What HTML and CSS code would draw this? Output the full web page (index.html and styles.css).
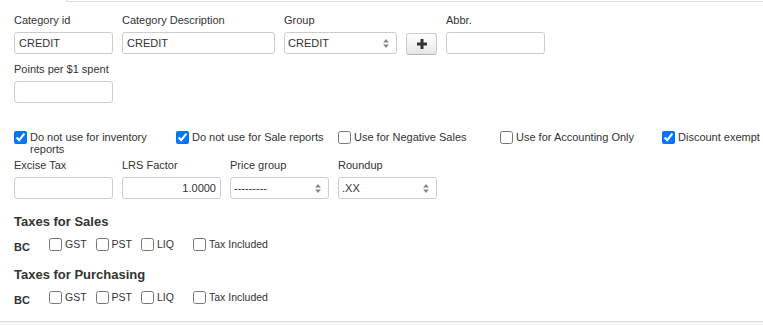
FILE: index.html
```html
<!DOCTYPE html>
<html lang="en">
  <head>
    <title>Category</title>
    <meta charset="UTF-8" />
    <meta name="viewport" content="width=device-width" />
    <link rel="stylesheet" href="styles.css">
  </head>
  <body>
    <!-- tab strip above the panel -->
    <div class="tabbar">
      <div class="tab-active"></div>
      <div class="tab-rest"></div>
    </div>

    <form class="panel">
      <!-- first row: id, description, group, abbr -->
      <div class="row">
        <div class="field w99">
          <label for="cat-id">Category id</label>
          <input id="cat-id" class="input-field" type="text" value="CREDIT" />
        </div>
        <div class="field w153">
          <label for="cat-desc">Category Description</label>
          <input id="cat-desc" class="input-field" type="text" value="CREDIT" />
        </div>
        <div class="field w113">
          <label for="group">Group</label>
          <div class="select-wrap">
            <select id="group" class="input-field">
              <option>CREDIT</option>
            </select>
            <svg class="arrows" width="6" height="9" viewBox="0 0 6 9"><path d="M3 0L6 3.5H0Z M3 9L0 5.5H6Z" fill="#888" /></svg>
          </div>
        </div>
        <div class="field">
          <label>&nbsp;</label>
          <button type="button" class="btn-add">
            <svg width="10" height="10" viewBox="0 0 10 10"><path d="M3.5 0h3v3.5H10v3H6.5V10h-3V6.5H0v-3h3.5Z" fill="#333" /></svg>
          </button>
        </div>
        <div class="field w99">
          <label for="abbr">Abbr.</label>
          <input id="abbr" class="input-field" type="text" />
        </div>
      </div>

      <div class="row">
        <div class="field w99">
          <label for="points">Points per $1 spent</label>
          <input id="points" class="input-field" type="text" />
        </div>
      </div>

      <!-- flags -->
      <div class="checks">
        <label class="check"><input type="checkbox" checked /><span>Do not use for inventory reports</span></label>
        <label class="check"><input type="checkbox" checked /><span>Do not use for Sale reports</span></label>
        <label class="check"><input type="checkbox" /><span>Use for Negative Sales</span></label>
        <label class="check"><input type="checkbox" /><span>Use for Accounting Only</span></label>
        <label class="check"><input type="checkbox" checked /><span>Discount exempt</span></label>
      </div>

      <div class="row">
        <div class="field w99">
          <label for="excise">Excise Tax</label>
          <input id="excise" class="input-field" type="text" />
        </div>
        <div class="field w99">
          <label for="lrs">LRS Factor</label>
          <input id="lrs" class="input-field num" type="text" value="1.0000" />
        </div>
        <div class="field w99">
          <label for="price-group">Price group</label>
          <div class="select-wrap">
            <select id="price-group" class="input-field">
              <option>---------</option>
            </select>
            <svg class="arrows" width="6" height="9" viewBox="0 0 6 9"><path d="M3 0L6 3.5H0Z M3 9L0 5.5H6Z" fill="#888" /></svg>
          </div>
        </div>
        <div class="field w99">
          <label for="roundup">Roundup</label>
          <div class="select-wrap">
            <select id="roundup" class="input-field">
              <option>.XX</option>
            </select>
            <svg class="arrows" width="6" height="9" viewBox="0 0 6 9"><path d="M3 0L6 3.5H0Z M3 9L0 5.5H6Z" fill="#888" /></svg>
          </div>
        </div>
      </div>

      <!-- taxes -->
      <h4>Taxes for Sales</h4>
      <div class="tax-row">
        <span class="prov">BC</span>
        <label class="tax"><input type="checkbox" />GST</label>
        <label class="tax"><input type="checkbox" />PST</label>
        <label class="tax"><input type="checkbox" />LIQ</label>
        <label class="tax incl"><input type="checkbox" />Tax Included</label>
      </div>

      <h4>Taxes for Purchasing</h4>
      <div class="tax-row">
        <span class="prov">BC</span>
        <label class="tax"><input type="checkbox" />GST</label>
        <label class="tax"><input type="checkbox" />PST</label>
        <label class="tax"><input type="checkbox" />LIQ</label>
        <label class="tax incl"><input type="checkbox" />Tax Included</label>
      </div>
    </form>

    <div class="footer"></div>
  </body>
</html>
```

FILE: styles.css
```css
* {
  box-sizing: border-box;
}

html,
body {
  height: 100%;
}

body {
  margin: 0;
  background-color: #fff;
  color: #333;
  font-family: "Liberation Sans", Arial, sans-serif;
  font-size: 11px;
  display: flex;
  flex-direction: column;
  overflow: hidden;
}

/* tab strip */
.tabbar {
  display: flex;
  height: 2px;
}

.tab-active {
  width: 66px;
}

.tab-rest {
  flex: 1;
  border-left: 1px solid #ddd;
  border-bottom: 1px solid #ddd;
}

.panel {
  padding: 11px 14px 0;
  height: 319px;
}

.row {
  display: flex;
  gap: 9px;
  margin-bottom: 7px;
}

.field {
  display: flex;
  flex-direction: column;
}

.field label {
  line-height: 15px;
  margin-bottom: 4px;
}

.w99 {
  width: 99px;
}

.w153 {
  width: 153px;
}

.w113 {
  width: 113px;
}

.input-field {
  width: 100%;
  height: 22px;
  border: 1px solid #ccc;
  border-radius: 3px;
  padding: 0 4px;
  font-family: inherit;
  font-size: 11px;
  color: #333;
  background-color: #fff;
}

.num {
  text-align: right;
}

.select-wrap {
  position: relative;
}

select.input-field {
  appearance: none;
  padding-left: 3px;
}

.arrows {
  position: absolute;
  right: 8px;
  top: 7px;
  pointer-events: none;
}

.btn-add {
  width: 31px;
  height: 22px;
  margin-top: 1px;
  border: 1px solid #ccc;
  border-bottom-color: #b3b3b3;
  border-radius: 3px;
  background: linear-gradient(#fff, #e6e6e6);
  display: flex;
  align-items: center;
  justify-content: center;
  padding: 0;
}

/* flag checkboxes */
.checks {
  display: grid;
  grid-template-columns: repeat(4, 162px) 1fr;
  margin-top: 28px;
  margin-bottom: 3px;
}

.check {
  display: flex;
  align-items: flex-start;
  line-height: 12px;
  padding-right: 14px;
}

.check:last-child {
  padding-right: 0;
  white-space: nowrap;
}

.check input,
.tax input {
  width: 13px;
  height: 13px;
  margin: 0 3px 0 0;
  flex-shrink: 0;
}

h4 {
  font-size: 13px;
  font-weight: bold;
  margin: 15px 0 6px;
  line-height: 16px;
}

.tax-row {
  display: flex;
  align-items: center;
  height: 16px;
}

.prov {
  font-weight: bold;
  width: 35px;
  padding-top: 6px;
}

.tax {
  display: flex;
  align-items: center;
  margin-right: 9px;
  font-size: 10.5px;
}

.tax input {
  margin: 0 3px 0 0;
}

.tax.incl {
  margin-left: 10px;
}

.footer {
  flex: 1;
  border-top: 1px solid #ddd;
  background-color: #f5f5f5;
}
```
